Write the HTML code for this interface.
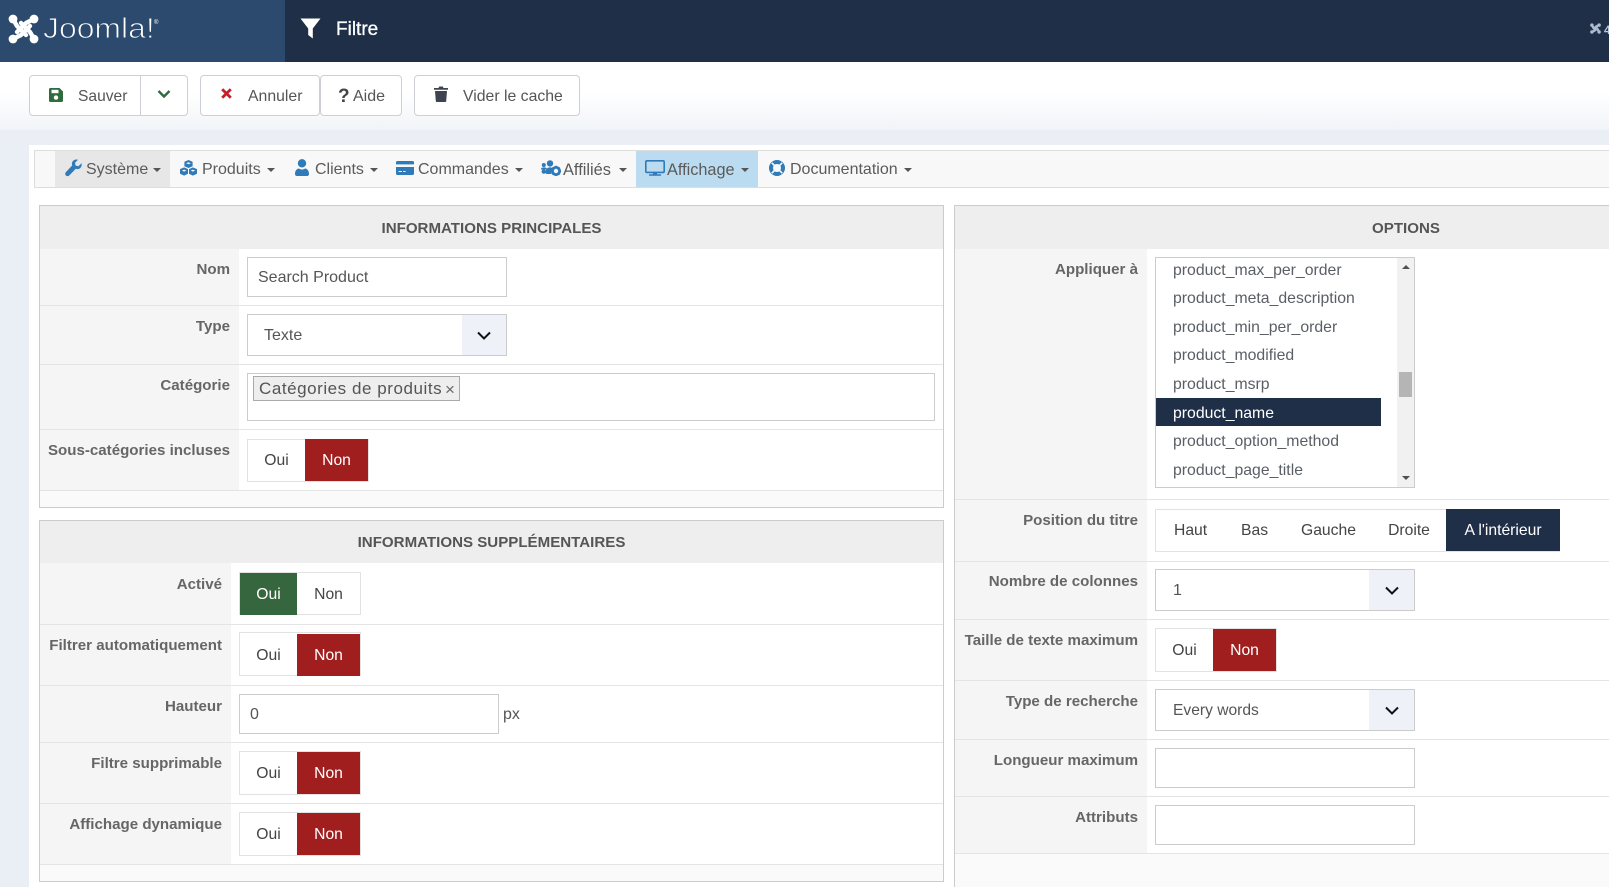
<!DOCTYPE html>
<html lang="fr"><head><meta charset="utf-8"><title>Filtre</title>
<style>
html,body{margin:0;padding:0;width:1609px;height:887px;overflow:hidden;background:#fff}
body{position:relative;font-family:"Liberation Sans",sans-serif;font-size:16px;color:#555}
div,span,svg{position:absolute;box-sizing:border-box}
#root{left:0;top:0;width:1609px;height:887px;overflow:hidden;background:#fff}
.t{white-space:nowrap;line-height:20px;height:20px;margin-top:2px}
.l{white-space:nowrap;line-height:20px;height:20px;margin-top:2px;font-weight:bold;font-size:15.1px;color:#666;text-align:right}
.h{white-space:nowrap;line-height:20px;height:20px;margin-top:2px;font-weight:bold;font-size:15.1px;color:#555;text-align:center}
.b{background:#fff;border:1px solid #ccc}
.btn{background:#fff;border:1px solid #ccd0d6;border-radius:4px}
.rowline{height:1px;background:#e4e4e4}
.c{text-align:center;line-height:20px;height:20px;margin-top:2px;white-space:nowrap;color:#444;font-size:15.7px}
.w{color:#fff}
.red{background:#a01e1e}
.wrap{background:#fff;border:1px solid #e2e2e2}
.arr{background:#eef2f8}
.opt{white-space:nowrap;line-height:20px;height:20px;margin-top:2px;left:1173px;color:#5a5f66;font-size:15.8px}
.nav{white-space:nowrap;line-height:20px;height:20px;margin-top:2px;top:158px;color:#5b5b5b}
.car{width:0;height:0;border-left:4px solid transparent;border-right:4px solid transparent;border-top:4px solid #555;top:168px}
</style></head>
<body>
<div id="root">
<!-- page bg -->
<div style="left:0;top:129px;width:1609px;height:758px;background:#e9eff5"></div>
<div style="left:0;top:62px;width:1609px;height:68px;background:linear-gradient(#fff 0%,#fff 45%,#f1f4f8 100%)"></div>
<div style="left:29px;top:145px;width:1580px;height:742px;background:#fff"></div>

<!-- header -->
<div style="left:0;top:0;width:1609px;height:62px;background:#1f2f47"></div>
<div style="left:0;top:0;width:285px;height:62px;background:#2c4a6e"></div>
<svg style="left:8px;top:13px" width="31" height="32" viewBox="0 0 31 32" fill="#fff">
<g stroke="#fff" stroke-width="4.4" fill="none" stroke-linecap="round" stroke-linejoin="round"><path d="M5 6L9 13 18 22"/><path d="M26 26L22 19 13 10"/><path d="M26 6L18 10 9 19"/><path d="M5 26L13 22 22 13"/></g>
<circle cx="5" cy="6" r="4.4"/><circle cx="26" cy="6" r="4.4"/><circle cx="5" cy="26" r="4.4"/><circle cx="26" cy="26" r="4.4"/>
</svg>
<div class="t" style="left:43px;top:12px;margin:0;height:34px;line-height:34px;font-size:29px;color:#fff;-webkit-text-stroke:.9px #2c4a6e;transform:scaleX(1.1);transform-origin:0 50%">Joomla!</div>
<div class="t" style="left:154px;top:19px;margin:0;font-size:6px;line-height:8px;height:8px;color:#fff">®</div>
<svg style="left:300px;top:18px" width="21" height="21" viewBox="0 0 21 21"><path d="M0.5 0.5H20.5L12.8 10.5V20.5L8.2 17V10.5Z" fill="#fff"/></svg>
<div class="t" style="left:336px;top:18px;font-size:19px;color:#fff;-webkit-text-stroke:.3px #fff">Filtre</div>
<svg style="left:1590px;top:23px" width="11" height="11" viewBox="0 0 31 32" fill="#aebbd0"><g stroke="#aebbd0" stroke-width="7" fill="none"><path d="M5 6L9 13 18 22"/><path d="M26 26L22 19 13 10"/><path d="M26 6L18 10 9 19"/><path d="M5 26L13 22 22 13"/></g><circle cx="5" cy="6" r="5"/><circle cx="26" cy="6" r="5"/><circle cx="5" cy="26" r="5"/><circle cx="26" cy="26" r="5"/></svg>
<div class="t" style="left:1604px;top:18px;font-size:12px;color:#bcc8da;font-weight:bold">4</div>

<!-- toolbar -->
<div class="btn" style="left:29px;top:75px;width:159px;height:41px"></div>
<div style="left:140px;top:75px;width:1px;height:41px;background:#ccd0d6"></div>
<svg style="left:49px;top:88px" width="14" height="14" viewBox="0 0 14 14"><path d="M1.5 0H10.5L14 3.5V12.5A1.5 1.5 0 0 1 12.5 14H1.5A1.5 1.5 0 0 1 0 12.5V1.5A1.5 1.5 0 0 1 1.5 0Z" fill="#2f6b3c"/><rect x="2.5" y="1.8" width="7" height="3.4" fill="#fff"/><circle cx="7" cy="9.6" r="2.2" fill="#fff"/></svg>
<div class="t" style="left:78px;top:85px;font-size:15.6px">Sauver</div>
<svg style="left:157px;top:89px" width="14" height="10" viewBox="0 0 14 10"><path d="M1.5 2L7 7.5 12.5 2" fill="none" stroke="#2f6b3c" stroke-width="2.4"/></svg>
<div class="t" style="left:248px;top:85px;z-index:2;font-size:15.8px">Annuler</div>
<div class="btn" style="left:200px;top:75px;width:120px;height:41px"></div>
<svg style="left:221px;top:88px" width="11" height="11" viewBox="0 0 11 11"><path d="M1.2 1.2L9.8 9.8M9.8 1.2L1.2 9.8" stroke="#c4202b" stroke-width="2.8" fill="none"/></svg>
<div class="btn" style="left:320px;top:75px;width:82px;height:41px"></div>
<div class="t" style="left:338px;top:85px;font-size:19px;font-weight:bold;color:#444">?</div>
<div class="t" style="left:353px;top:85px">Aide</div>
<div class="btn" style="left:414px;top:75px;width:166px;height:41px"></div>
<svg style="left:434px;top:86px" width="14" height="16" viewBox="0 0 14 16"><path d="M0 2H4.5L5.2 .5H8.8L9.5 2H14V3.8H0ZM1 5H13L12.2 15A1 1 0 0 1 11.2 16H2.8A1 1 0 0 1 1.8 15Z" fill="#3d4450"/></svg>
<div class="t" style="left:463px;top:85px;font-size:15.8px">Vider le cache</div>

<!-- nav -->
<div style="left:34px;top:150px;width:1575px;height:38px;background:#f8f8f8;border:1px solid #ddd;border-right:0"></div>
<div style="left:55px;top:151px;width:115px;height:36px;background:#e7e7e7"></div>
<div style="left:636px;top:151px;width:122px;height:36px;background:#bbdcf0"></div>
<svg style="left:65px;top:159px" width="17" height="18" viewBox="0 0 17 18"><path d="M16.5 4.2L13.4 7.2 10.6 6.6 10 3.8 13 .8C10.8 0 8.4.8 7.4 2.8 6.8 4 6.8 5.2 7.2 6.4L.8 13.2C0 14.1 0 15.6.9 16.5S3.3 17.4 4.2 16.5L10.8 9.8C12.2 10.4 13.8 10.2 15 9.2 16.5 8 17 6 16.5 4.2Z" fill="#2f7ab8"/></svg>
<div class="nav" style="left:86px">Système</div><div class="car" style="left:153px"></div>
<svg style="left:180px;top:160px" width="17" height="16" viewBox="0 0 17 16" fill="#2f7ab8"><path d="M8.5 0L12.6 1.8V6.2L8.5 8 4.4 6.2V1.8Z"/><path d="M4.1 7.4L8 9.1V13.8L4.1 15.6 0 13.8V9.1Z"/><path d="M12.9 7.4L17 9.1V13.8L12.9 15.6 9 13.8V9.1Z"/><g fill="#f8f8f8"><path d="M8.5 2.2l2.4 1-2.4 1-2.4-1z"/><path d="M4.1 9.6l2.2 1-2.2 1-2.2-1z"/><path d="M12.9 9.6l2.2 1-2.2 1-2.2-1z"/></g></svg>
<div class="nav" style="left:202px">Produits</div><div class="car" style="left:267px"></div>
<svg style="left:295px;top:159px" width="14" height="17" viewBox="0 0 14 17" fill="#2f7ab8"><circle cx="7" cy="4.3" r="4.2"/><path d="M0 15C0 11.5 2 9.5 4 9.5 5 10.2 6 10.5 7 10.5S9 10.2 10 9.5C12 9.5 14 11.5 14 15 14 16.2 13.2 17 12 17H2C.8 17 0 16.2 0 15Z"/></svg>
<div class="nav" style="left:315px">Clients</div><div class="car" style="left:370px"></div>
<svg style="left:396px;top:161px" width="18" height="14" viewBox="0 0 18 14"><path d="M1.5 0H16.5A1.5 1.5 0 0 1 18 1.5V3.4H0V1.5A1.5 1.5 0 0 1 1.5 0ZM0 6H18V12.5A1.5 1.5 0 0 1 16.5 14H1.5A1.5 1.5 0 0 1 0 12.5ZM2.5 10V11H6V10ZM7.2 10V11H9.6V10Z" fill="#2f7ab8" fill-rule="evenodd"/></svg>
<div class="nav" style="left:418px">Commandes</div><div class="car" style="left:515px"></div>
<svg style="left:541px;top:160px" width="20" height="16" viewBox="0 0 20 16" fill="#2f7ab8"><circle cx="9" cy="3.4" r="3.2"/><circle cx="2.8" cy="5" r="2"/><circle cx="2.8" cy="11.6" r="2.2"/><path d="M0 9.2C0 7.8 1.2 7.4 3 7.4S6 8 6 9.2V9.5H0Z"/><path d="M4.5 12C5 8.6 7 7.4 9 7.4 10 7.4 11 7.7 11.5 8.2 10.5 10 10 12 10.4 14H6C5 14 4.4 13 4.5 12Z"/><circle cx="15" cy="11" r="3.6" fill="none" stroke="#2f7ab8" stroke-width="2.8"/><g stroke="#2f7ab8" stroke-width="1.8"><path d="M15 5.7v2M15 14.3v1.7M9.8 11h1.8M18.4 11h1.6M11.4 7.4l1.2 1.2M17.4 13.4l1.2 1.2M18.6 7.4l-1.2 1.2M12.6 13.4l-1.2 1.2"/></g></svg>
<div class="nav" style="left:563px;font-size:16.4px">Affiliés</div><div class="car" style="left:619px"></div>
<svg style="left:645px;top:160px" width="20" height="16" viewBox="0 0 20 16"><rect x=".8" y=".8" width="18.4" height="11.6" rx="1.2" fill="none" stroke="#2f7ab8" stroke-width="1.6"/><rect x="8" y="12.6" width="4" height="1.8" fill="#2f7ab8"/><rect x="4" y="14.2" width="12" height="1.6" rx=".6" fill="#2f7ab8"/></svg>
<div class="nav" style="left:667px;font-size:16.3px">Affichage</div><div class="car" style="left:741px"></div>
<svg style="left:769px;top:160px" width="16" height="16" viewBox="0 0 16 16"><circle cx="8" cy="8" r="6" fill="none" stroke="#2f7ab8" stroke-width="4"/><g stroke="#f8f8f8" stroke-width="1.6"><path d="M2.8 2.8L5.5 5.5M13.2 2.8L10.5 5.5M2.8 13.2L5.5 10.5M13.2 13.2L10.5 10.5"/></g></svg>
<div class="nav" style="left:790px">Documentation</div><div class="car" style="left:904px"></div>

<!-- panel 1 -->
<div style="left:39px;top:205px;width:905px;height:303px;background:#fafafa;border:1px solid #ccc"></div>
<div style="left:40px;top:206px;width:903px;height:43px;background:#eee"></div>
<div class="h" style="left:40px;top:217px;width:903px">INFORMATIONS PRINCIPALES</div>
<div style="left:40px;top:249px;width:199px;height:241px;background:#f5f5f5"></div>
<div style="left:239px;top:249px;width:704px;height:241px;background:#fff"></div>
<div class="rowline" style="left:40px;top:305px;width:903px"></div>
<div class="rowline" style="left:40px;top:364px;width:903px"></div>
<div class="rowline" style="left:40px;top:429px;width:903px"></div>
<div class="rowline" style="left:40px;top:490px;width:903px"></div>
<div class="l" style="left:40px;width:190px;top:258px">Nom</div>
<div class="l" style="left:40px;width:190px;top:315px">Type</div>
<div class="l" style="left:40px;width:190px;top:374px">Catégorie</div>
<div class="l" style="left:40px;width:190px;top:439px">Sous-catégories incluses</div>
<div class="b" style="left:247px;top:257px;width:260px;height:40px"></div>
<div class="t" style="left:258px;top:266px">Search Product</div>
<div class="b" style="left:247px;top:314px;width:260px;height:42px"></div>
<div class="arr" style="left:462px;top:315px;width:44px;height:40px"></div>
<svg style="left:476px;top:330px" width="16" height="12" viewBox="0 0 16 12"><path d="M2 2.5L8 8.5 14 2.5" fill="none" stroke="#111" stroke-width="2"/></svg>
<div class="t" style="left:264px;top:324px">Texte</div>
<div class="b" style="left:247px;top:373px;width:688px;height:48px"></div>
<div style="left:253px;top:376px;width:207px;height:25px;background:#eee;border:1px solid #aaa"></div>
<div class="t" style="left:259px;top:377px;font-size:17px;letter-spacing:.55px">Catégories de produits</div>
<div class="t" style="left:445px;top:378px;font-size:17px;color:#666">×</div>
<!-- toggle -->
<div class="wrap" style="left:247px;top:439px;width:122px;height:43px"></div>
<div class="red" style="left:305px;top:439px;width:63px;height:42px"></div>
<div class="c" style="left:248px;top:449px;width:57px">Oui</div>
<div class="c w" style="left:305px;top:449px;width:63px">Non</div>

<!-- panel 2 -->
<div style="left:39px;top:520px;width:905px;height:362px;background:#fafafa;border:1px solid #ccc"></div>
<div style="left:40px;top:521px;width:903px;height:42px;background:#eee"></div>
<div class="h" style="left:40px;top:531px;width:903px">INFORMATIONS SUPPLÉMENTAIRES</div>
<div style="left:40px;top:563px;width:191px;height:301px;background:#f5f5f5"></div>
<div style="left:231px;top:563px;width:712px;height:301px;background:#fff"></div>
<div class="rowline" style="left:40px;top:624px;width:903px"></div>
<div class="rowline" style="left:40px;top:685px;width:903px"></div>
<div class="rowline" style="left:40px;top:742px;width:903px"></div>
<div class="rowline" style="left:40px;top:803px;width:903px"></div>
<div class="rowline" style="left:40px;top:864px;width:903px"></div>
<div class="l" style="left:40px;width:182px;top:573px">Activé</div>
<div class="l" style="left:40px;width:182px;top:634px">Filtrer automatiquement</div>
<div class="l" style="left:40px;width:182px;top:695px">Hauteur</div>
<div class="l" style="left:40px;width:182px;top:752px">Filtre supprimable</div>
<div class="l" style="left:40px;width:182px;top:813px">Affichage dynamique</div>
<div class="wrap" style="left:239px;top:572px;width:122px;height:43px"></div>
<div style="left:240px;top:573px;width:57px;height:42px;background:#36663e"></div>
<div class="c w" style="left:240px;top:583px;width:57px">Oui</div>
<div class="c" style="left:297px;top:583px;width:63px">Non</div>
<div class="wrap" style="left:239px;top:632px;width:122px;height:44px"></div>
<div class="red" style="left:297px;top:634px;width:63px;height:42px"></div>
<div class="c" style="left:240px;top:644px;width:57px">Oui</div>
<div class="c w" style="left:297px;top:644px;width:63px">Non</div>
<div class="b" style="left:239px;top:694px;width:260px;height:40px"></div>
<div class="t" style="left:250px;top:703px">0</div>
<div class="t" style="left:503px;top:703px">px</div>
<div class="wrap" style="left:239px;top:751px;width:122px;height:44px"></div>
<div class="red" style="left:297px;top:752px;width:63px;height:42px"></div>
<div class="c" style="left:240px;top:762px;width:57px">Oui</div>
<div class="c w" style="left:297px;top:762px;width:63px">Non</div>
<div class="wrap" style="left:239px;top:812px;width:122px;height:44px"></div>
<div class="red" style="left:297px;top:813px;width:63px;height:42px"></div>
<div class="c" style="left:240px;top:823px;width:57px">Oui</div>
<div class="c w" style="left:297px;top:823px;width:63px">Non</div>

<!-- panel 3 -->
<div style="left:954px;top:205px;width:655px;height:682px;background:#fafafa;border:1px solid #ccc;border-right:0;border-bottom:0"></div>
<div style="left:955px;top:206px;width:654px;height:43px;background:#eee"></div>
<div class="h" style="left:955px;top:217px;width:902px">OPTIONS</div>
<div style="left:955px;top:249px;width:192px;height:604px;background:#f5f5f5"></div>
<div style="left:1147px;top:249px;width:462px;height:604px;background:#fff"></div>
<div class="rowline" style="left:955px;top:499px;width:654px"></div>
<div class="rowline" style="left:955px;top:561px;width:654px"></div>
<div class="rowline" style="left:955px;top:619px;width:654px"></div>
<div class="rowline" style="left:955px;top:680px;width:654px"></div>
<div class="rowline" style="left:955px;top:739px;width:654px"></div>
<div class="rowline" style="left:955px;top:796px;width:654px"></div>
<div class="rowline" style="left:955px;top:853px;width:654px"></div>
<div class="l" style="left:955px;width:183px;top:258px">Appliquer à</div>
<div class="l" style="left:955px;width:183px;top:509px">Position du titre</div>
<div class="l" style="left:955px;width:183px;top:570px">Nombre de colonnes</div>
<div class="l" style="left:955px;width:183px;top:629px">Taille de texte maximum</div>
<div class="l" style="left:955px;width:183px;top:690px">Type de recherche</div>
<div class="l" style="left:955px;width:183px;top:749px">Longueur maximum</div>
<div class="l" style="left:955px;width:183px;top:806px">Attributs</div>
<!-- listbox -->
<div class="b" style="left:1155px;top:257px;width:260px;height:231px"></div>
<div style="left:1397px;top:258px;width:17px;height:229px;background:#f1f1f1"></div>
<div style="left:1399px;top:372px;width:13px;height:25px;background:#b5b5b5"></div>
<div style="left:1402px;top:265px;width:0;height:0;border-left:4px solid transparent;border-right:4px solid transparent;border-bottom:4px solid #505050"></div>
<div style="left:1402px;top:476px;width:0;height:0;border-left:4px solid transparent;border-right:4px solid transparent;border-top:4px solid #505050"></div>
<div style="left:1156px;top:398px;width:225px;height:28px;background:#1f2f47"></div>
<div class="opt" style="top:259px">product_max_per_order</div>
<div class="opt" style="top:287px">product_meta_description</div>
<div class="opt" style="top:316px">product_min_per_order</div>
<div class="opt" style="top:344px">product_modified</div>
<div class="opt" style="top:373px">product_msrp</div>
<div class="opt" style="top:402px;color:#fff">product_name</div>
<div class="opt" style="top:430px">product_option_method</div>
<div class="opt" style="top:459px">product_page_title</div>
<!-- segment -->
<div class="wrap" style="left:1155px;top:509px;width:405px;height:43px"></div>
<div style="left:1446px;top:509px;width:114px;height:42px;background:#1f2f47"></div>
<div class="c" style="left:1174px;top:519px;width:33px">Haut</div>
<div class="c" style="left:1241px;top:519px;width:26px">Bas</div>
<div class="c" style="left:1301px;top:519px;width:53px">Gauche</div>
<div class="c" style="left:1388px;top:519px;width:42px">Droite</div>
<div class="c w" style="left:1446px;top:519px;width:114px">A l'intérieur</div>
<!-- selects -->
<div class="b" style="left:1155px;top:569px;width:260px;height:42px"></div>
<div class="arr" style="left:1369px;top:570px;width:45px;height:40px"></div>
<svg style="left:1384px;top:585px" width="16" height="12" viewBox="0 0 16 12"><path d="M2 2.5L8 8.5 14 2.5" fill="none" stroke="#111" stroke-width="2"/></svg>
<div class="t" style="left:1173px;top:579px">1</div>
<div class="wrap" style="left:1155px;top:628px;width:122px;height:44px"></div>
<div class="red" style="left:1213px;top:629px;width:63px;height:42px"></div>
<div class="c" style="left:1156px;top:639px;width:57px">Oui</div>
<div class="c w" style="left:1213px;top:639px;width:63px">Non</div>
<div class="b" style="left:1155px;top:689px;width:260px;height:42px"></div>
<div class="arr" style="left:1369px;top:690px;width:45px;height:40px"></div>
<svg style="left:1384px;top:705px" width="16" height="12" viewBox="0 0 16 12"><path d="M2 2.5L8 8.5 14 2.5" fill="none" stroke="#111" stroke-width="2"/></svg>
<div class="t" style="left:1173px;top:699px;font-size:15.6px">Every words</div>
<div class="b" style="left:1155px;top:748px;width:260px;height:40px"></div>
<div class="b" style="left:1155px;top:805px;width:260px;height:40px"></div>
</div>
</body></html>
